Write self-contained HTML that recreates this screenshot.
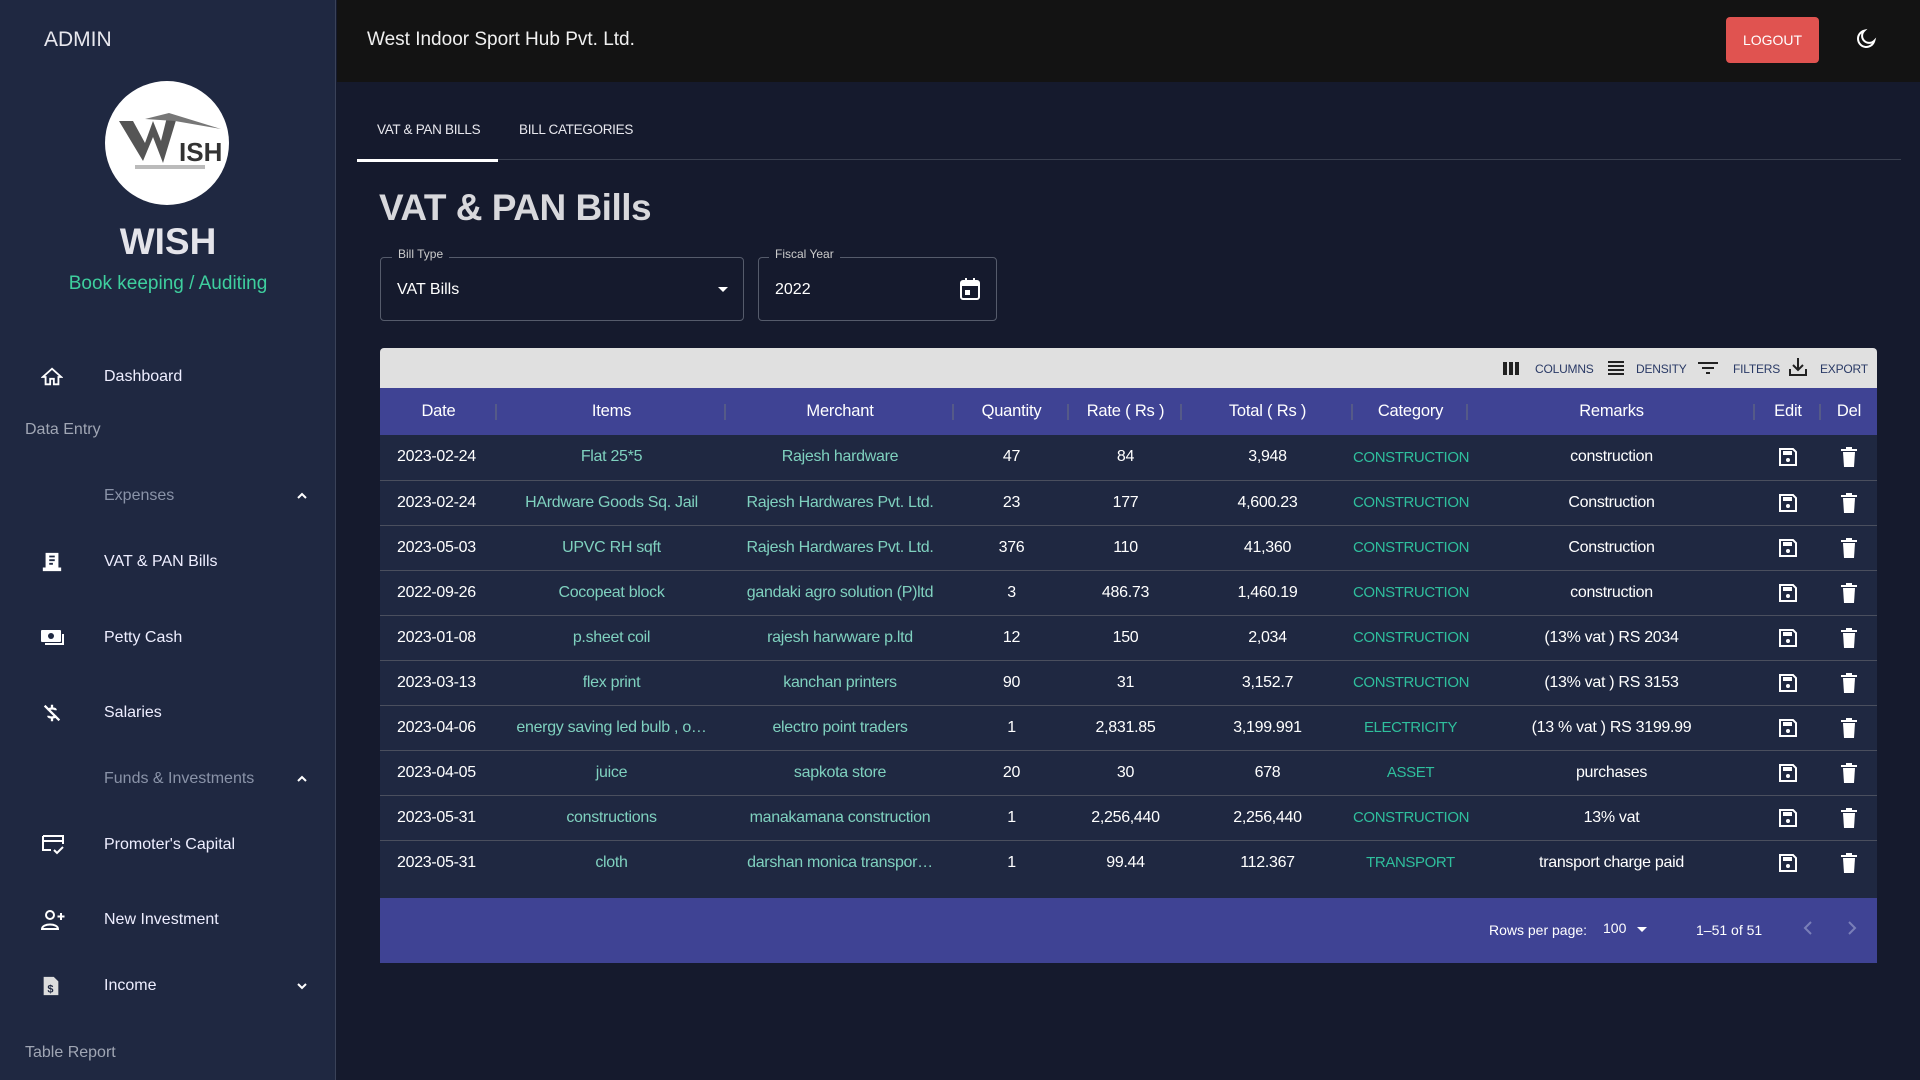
<!DOCTYPE html>
<html><head><meta charset="utf-8"><style>
*{margin:0;padding:0;box-sizing:border-box}
body{width:1920px;height:1080px;overflow:hidden;background:#151a2d;font-family:"Liberation Sans",sans-serif;color:#fff;position:relative}
.abs{position:absolute}
#side{left:0;top:0;width:336px;height:1080px;background:#1f2841;border-right:1px solid #3a4258}
#top{left:337px;top:0;width:1583px;height:82px;background:#131313}
.nav{position:absolute;left:104px;font-size:16px;color:#eef;transform:translateY(-50%)}
.ic{position:absolute;left:41px;transform:translateY(-50%)}
.grp{position:absolute;left:104px;font-size:16px;color:#8a93a8;transform:translateY(-50%)}
.sec{position:absolute;left:25px;font-size:16px;color:#a0a6b4;transform:translateY(-50%)}
.chev{position:absolute;left:294px;transform:translateY(-50%)}
table{border-collapse:collapse;position:absolute;left:380px;top:388px;width:1497px;table-layout:fixed}
th{height:47px;background:#3f4394;font-weight:normal;font-size:16.5px;position:relative;letter-spacing:-0.2px}
td{height:45px;background:#1f2841;border-bottom:1px solid #4a4f5e;text-align:center;font-size:16px;white-space:nowrap;overflow:hidden;text-overflow:ellipsis;letter-spacing:-0.3px}
td.c{overflow:visible;text-overflow:clip;font-size:15px;letter-spacing:-0.4px}
th .sep{position:absolute;right:0;top:16px;width:2px;height:16px;background:#555a88}
.g{color:#7fd1bf}.c{color:#2fbf9d}
td:first-child{text-align:left;padding-left:17px}
td svg{vertical-align:middle}
</style></head><body>
<div id="side" class="abs">
 <div class="abs" style="left:44px;top:28px;font-size:21px;color:#e8e8ee">ADMIN</div>
 <div class="abs" style="left:105px;top:81px;width:124px;height:124px;border-radius:50%;background:#fff;overflow:hidden">
  <svg width="124" height="124" viewBox="0 0 124 124"><polygon points="14,40 38,80 48,56 58,82 72,36 62,36 56,60 48,40 40,62 28,40" fill="#555"/><polygon points="40,38 64,32 116,48 70,40" fill="#777"/><text x="74" y="80" font-size="26" font-weight="bold" fill="#333" font-family="Liberation Sans">ISH</text><rect x="30" y="84" width="70" height="4" fill="#bbb"/></svg>
 </div>
 <div class="abs" style="left:0;width:336px;text-align:center;top:221px;font-size:37px;font-weight:bold;color:#e4e4ea">WISH</div>
 <div class="abs" style="left:0;width:336px;text-align:center;top:273px;font-size:19px;color:#3ecf9e">Book keeping / Auditing</div>
 <svg class="ic" style="top:377px" width="22" height="22" viewBox="0 0 24 24"><path d="M12 3L2 12h3v8h5v-6h4v6h5v-8h3z" fill="none" stroke="#fff" stroke-width="2"/></svg>
 <div class="nav" style="top:377px">Dashboard</div>
 <div class="sec" style="top:430px">Data Entry</div>
 <div class="grp" style="top:496px">Expenses</div>
 <svg class="chev" style="top:496px" width="16" height="16" viewBox="0 0 24 24"><path d="M6 15l6-6 6 6" fill="none" stroke="#fff" stroke-width="3"/></svg>
 <svg class="ic" style="top:562px" width="22" height="22" viewBox="0 0 24 24"><path d="M5 2h14v16H5zM2 18h20v4H2z" fill="#fff"/><path d="M9 6h6M9 10h6M9 14h4" stroke="#1f2841" stroke-width="2"/></svg>
 <div class="nav" style="top:562px">VAT &amp; PAN Bills</div>
 <svg class="ic" style="top:638px" width="24" height="20" viewBox="0 0 24 20"><rect x="0" y="2" width="20" height="12" rx="1" fill="#fff"/><circle cx="10" cy="8" r="3" fill="#1f2841"/><path d="M22 6v10H4" fill="none" stroke="#fff" stroke-width="2"/></svg>
 <div class="nav" style="top:638px">Petty Cash</div>
 <svg class="ic" style="top:713px" width="22" height="22" viewBox="0 0 24 24"><path d="M4 4l16 16M12 3v3M12 18v3M8 9c0-2 8-3 8 0M8 15c0 3 8 2 8 0" fill="none" stroke="#fff" stroke-width="2.5"/></svg>
 <div class="nav" style="top:713px">Salaries</div>
 <div class="grp" style="top:779px">Funds &amp; Investments</div>
 <svg class="chev" style="top:779px" width="16" height="16" viewBox="0 0 24 24"><path d="M6 15l6-6 6 6" fill="none" stroke="#fff" stroke-width="3"/></svg>
 <svg class="ic" style="top:845px" width="24" height="22" viewBox="0 0 24 22"><path d="M2 2h20v8M2 2v14h8M2 7h20M13 16l3 3 6-6" fill="none" stroke="#fff" stroke-width="2"/></svg>
 <div class="nav" style="top:845px">Promoter's Capital</div>
 <svg class="ic" style="top:920px" width="24" height="22" viewBox="0 0 24 22"><circle cx="9" cy="6" r="4" fill="none" stroke="#fff" stroke-width="2"/><path d="M1 20c0-6 16-6 16 0zM20 4v7M16.5 7.5h7" fill="none" stroke="#fff" stroke-width="2"/></svg>
 <div class="nav" style="top:920px">New Investment</div>
 <svg class="ic" style="top:986px" width="20" height="22" viewBox="0 0 20 24"><path d="M2 2h11l5 5v15H2z" fill="#ddd"/><text x="6" y="19" font-size="12" font-weight="bold" fill="#1f2841" font-family="Liberation Sans">$</text></svg>
 <div class="nav" style="top:986px">Income</div>
 <svg class="chev" style="top:986px" width="16" height="16" viewBox="0 0 24 24"><path d="M6 9l6 6 6-6" fill="none" stroke="#fff" stroke-width="3"/></svg>
 <div class="sec" style="top:1053px">Table Report</div>
</div>
<div id="top" class="abs">
 <div class="abs" style="left:30px;top:29px;font-size:19px;color:#f0f0f0">West Indoor Sport Hub Pvt. Ltd.</div>
 <div class="abs" style="left:1389px;top:17px;width:93px;height:46px;background:#e05350;border-radius:4px;font-size:14px;text-align:center;line-height:46px">LOGOUT</div>
 <svg class="abs" style="left:1518px;top:28px" width="22" height="22" viewBox="0 0 24 24"><path d="M10 3a9 9 0 1 0 11 11A7 7 0 0 1 10 3z" fill="none" stroke="#fff" stroke-width="2.2"/></svg>
</div>
<div class="abs" style="left:377px;top:122px;font-size:13.5px;color:#e8e8ee;letter-spacing:-0.3px">VAT &amp; PAN BILLS</div>
<div class="abs" style="left:519px;top:122px;font-size:13.5px;color:#e8e8ee;letter-spacing:-0.3px">BILL CATEGORIES</div>
<div class="abs" style="left:357px;top:159px;width:141px;height:3px;background:#fff"></div>
<div class="abs" style="left:498px;top:159px;width:1403px;height:1px;background:#3a4050"></div>
<div class="abs" style="left:379px;top:187px;font-size:37px;font-weight:bold;color:#d8d8dc;letter-spacing:-0.5px">VAT &amp; PAN Bills</div>
<div class="abs" style="left:380px;top:257px;width:364px;height:64px;border:1px solid #555b6b;border-radius:4px"></div>
<div class="abs" style="left:392px;top:247px;padding:0 6px;background:#151a2d;font-size:12px;color:#ccc">Bill Type</div>
<div class="abs" style="left:397px;top:281px;font-size:16px">VAT Bills</div>
<svg class="abs" style="left:716px;top:285px" width="14" height="10"><path d="M2 2h10L7 7z" fill="#fff"/></svg>
<div class="abs" style="left:758px;top:257px;width:239px;height:64px;border:1px solid #555b6b;border-radius:4px"></div>
<div class="abs" style="left:769px;top:247px;padding:0 6px;background:#151a2d;font-size:12px;color:#ccc">Fiscal Year</div>
<div class="abs" style="left:775px;top:281px;font-size:16px">2022</div>
<svg class="abs" style="left:959px;top:277px" width="22" height="24" viewBox="0 0 22 24"><rect x="2" y="4" width="18" height="18" rx="2" fill="none" stroke="#fff" stroke-width="2"/><rect x="2" y="4" width="18" height="5" fill="#fff"/><rect x="6" y="1" width="2" height="5" fill="#fff"/><rect x="14" y="1" width="2" height="5" fill="#fff"/><rect x="6" y="13" width="5" height="5" fill="#fff"/></svg>
<div class="abs" style="left:380px;top:348px;width:1497px;height:40px;background:#e0e0e0;border-radius:4px 4px 0 0;color:#2a3a66;font-size:12px;letter-spacing:-0.2px">
 <svg class="abs" style="left:1123px;top:14px" width="18" height="13"><rect x="0" y="0" width="4" height="13" fill="#222"/><rect x="6" y="0" width="4" height="13" fill="#222"/><rect x="12" y="0" width="4" height="13" fill="#222"/></svg>
 <div class="abs" style="left:1155px;top:14px">COLUMNS</div>
 <svg class="abs" style="left:1228px;top:13px" width="16" height="15"><path d="M0 1h16M0 5h16M0 9h16M0 13h16" stroke="#222" stroke-width="2"/></svg>
 <div class="abs" style="left:1256px;top:14px">DENSITY</div>
 <svg class="abs" style="left:1318px;top:13px" width="20" height="15"><path d="M0 2h20M4 7h12M8 12h4" stroke="#222" stroke-width="2"/></svg>
 <div class="abs" style="left:1353px;top:14px">FILTERS</div>
 <svg class="abs" style="left:1409px;top:10px" width="18" height="19"><path d="M9 0v11M4 7l5 5 5-5M1 11v6h16v-6" fill="none" stroke="#222" stroke-width="2"/></svg>
 <div class="abs" style="left:1440px;top:14px">EXPORT</div>
</div>
<table>
<colgroup><col style="width:117px"><col style="width:229px"><col style="width:228px"><col style="width:115px"><col style="width:113px"><col style="width:171px"><col style="width:115px"><col style="width:287px"><col style="width:66px"><col style="width:56px"></colgroup>
<tr><th>Date<span class="sep"></span></th><th>Items<span class="sep"></span></th><th>Merchant<span class="sep"></span></th><th>Quantity<span class="sep"></span></th><th>Rate ( Rs )<span class="sep"></span></th><th>Total ( Rs )<span class="sep"></span></th><th>Category<span class="sep"></span></th><th>Remarks<span class="sep"></span></th><th>Edit<span class="sep"></span></th><th>Del</th></tr>
<tbody id="tb"></tbody>
</table>
<div class="abs" style="left:380px;top:885px;width:1497px;height:13px;background:#1f2841"></div>
<div class="abs" style="left:380px;top:898px;width:1497px;height:65px;background:#3f4394;font-size:14px">
 <div class="abs" style="left:1109px;top:24px">Rows per page:</div>
 <div class="abs" style="left:1223px;top:22px;font-size:14px">100</div>
 <svg class="abs" style="left:1256px;top:28px" width="12" height="8"><path d="M1 1h10L6 6z" fill="#fff"/></svg>
 <div class="abs" style="left:1316px;top:24px">1–51 of 51</div>
 <svg class="abs" style="left:1422px;top:22px" width="12" height="16"><path d="M9 2L3 8l6 6" fill="none" stroke="#7a7fb8" stroke-width="2"/></svg>
 <svg class="abs" style="left:1466px;top:22px" width="12" height="16"><path d="M3 2l6 6-6 6" fill="none" stroke="#7a7fb8" stroke-width="2"/></svg>
</div>
<script>
var d=[["2023-02-24","Flat 25*5","Rajesh hardware","47","84","3,948","CONSTRUCTION","construction"],
["2023-02-24","HArdware Goods Sq. Jail","Rajesh Hardwares Pvt. Ltd.","23","177","4,600.23","CONSTRUCTION","Construction"],
["2023-05-03","UPVC RH sqft","Rajesh Hardwares Pvt. Ltd.","376","110","41,360","CONSTRUCTION","Construction"],
["2022-09-26","Cocopeat block","gandaki agro solution (P)ltd","3","486.73","1,460.19","CONSTRUCTION","construction"],
["2023-01-08","p.sheet coil","rajesh harwware p.ltd","12","150","2,034","CONSTRUCTION","(13% vat ) RS 2034"],
["2023-03-13","flex print","kanchan printers","90","31","3,152.7","CONSTRUCTION","(13% vat ) RS 3153"],
["2023-04-06","energy saving led bulb , o…","electro point traders","1","2,831.85","3,199.991","ELECTRICITY","(13 % vat ) RS 3199.99"],
["2023-04-05","juice","sapkota store","20","30","678","ASSET","purchases"],
["2023-05-31","constructions","manakamana construction","1","2,256,440","2,256,440","CONSTRUCTION","13% vat"],
["2023-05-31","cloth","darshan monica transpor…","1","99.44","112.367","TRANSPORT","transport charge paid"]];
var sv='<svg width="20" height="20" viewBox="0 0 20 20"><path d="M2 2h13l3 3v13H2z" fill="none" stroke="#fff" stroke-width="2"/><rect x="5" y="4" width="9" height="4" fill="#fff"/><circle cx="10" cy="13" r="2" fill="#fff"/></svg>';
var tr='<svg width="16" height="20" viewBox="0 0 16 20"><rect x="0" y="2" width="16" height="2" fill="#fff"/><rect x="5" y="0" width="6" height="3" fill="#fff"/><path d="M2 5h12l-1 15H3z" fill="#fff"/></svg>';
var h='';d.forEach(function(r){h+='<tr><td>'+r[0]+'</td><td class="g">'+r[1]+'</td><td class="g">'+r[2]+'</td><td>'+r[3]+'</td><td>'+r[4]+'</td><td>'+r[5]+'</td><td class="c">'+r[6]+'</td><td>'+r[7]+'</td><td>'+sv+'</td><td>'+tr+'</td></tr>'});
document.getElementById('tb').innerHTML=h;
</script>
</body></html>
